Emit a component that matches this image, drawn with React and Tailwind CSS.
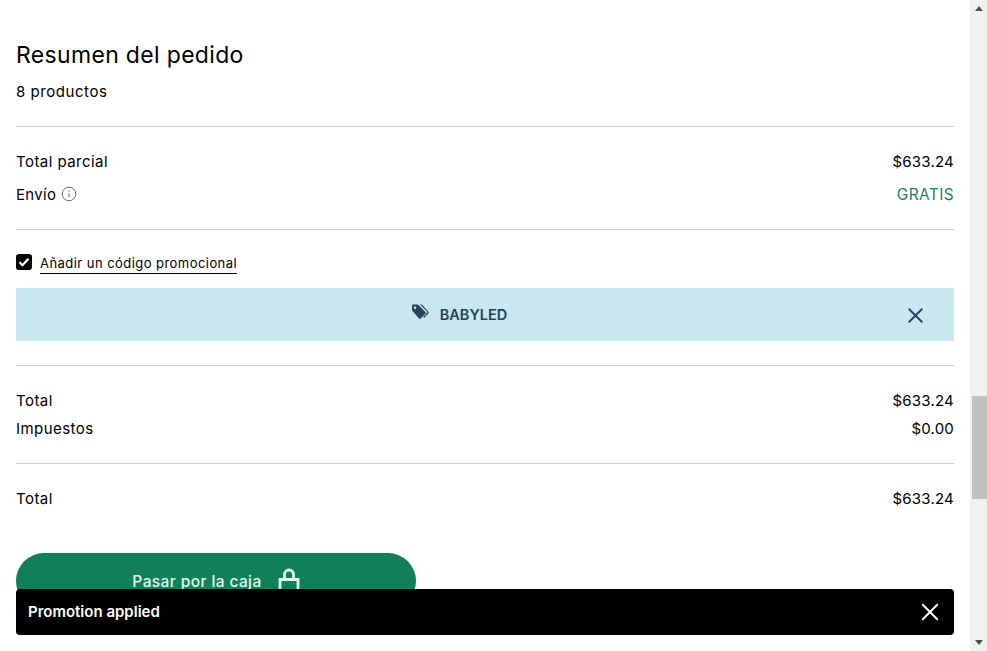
import React from "react";
import { X } from "lucide-react";

function Row({ label, value, className = "" }) {
  return (
    <div className={`flex items-center justify-between ${className}`}>
      <span>{label}</span>
      <span className="tracking-[0.2px]">{value}</span>
    </div>
  );
}

function TagIcon() {
  return (
    <svg viewBox="0 0 18 16" fill="#24445c" className="h-[18px] w-[18px]" aria-hidden="true">
      <path d="M1 1.6C1 1 1.500.5 2.100.5h4.200c.4 0 .8.2 1.100.5l7 7c.5.5.5 1.300 0 1.800l-4.600 4.600c-.5.5-1.300.5-1.800 0L1.500 7.100C1.200 6.800 1 6.400 1 6V1.600zM4 5a1.300 1.300 0 1 0 0-2.600A1.300 1.300 0 0 0 4 5z" fillRule="evenodd" />
      <path d="M9 .5h1.200c.4 0 .8.2 1.100.5l5.800 6.200c.8.800.8 1.800 0 2.600l-4 4.100-.9-.9 3.800-3.900c.4-.5.400-1 0-1.500L9 .5z" />
    </svg>
  );
}

function LockIcon() {
  return (
    <svg viewBox="0 0 22 28" fill="none" stroke="currentColor" strokeWidth="2.800" className="h-[28px] w-[22px]" aria-hidden="true">
      <path d="M2 11.500h18V26H2z" />
      <path d="M6.500 11.500V6.500a4.500 4.500 0 0 1 9 0v5" />
    </svg>
  );
}

export default function App() {
  return (
    <div className="flex h-[651px] overflow-hidden bg-white font-['Inter',sans-serif] text-[15px] tracking-[0.45px] text-black">
      <main className="min-w-0 flex-1 px-4">
        <h1 className="mt-[40px] h-[30px] text-[23px] leading-[30px] font-normal tracking-[0.33px] text-black">
          Resumen del pedido
        </h1>
        <p className="mt-[10px] h-[24px] leading-[24px] tracking-[0.55px]">8 productos</p>

        <div className="mt-[22px] border-t border-[#cfcfcf] pt-[23px]">
          <Row label="Total parcial" value="$633.24" className="h-[24px]" />
          <div className="mt-[9px] flex h-[24px] items-center justify-between">
            <div className="flex items-center gap-[5px]">
              <span className="tracking-[0.3px]">Envío</span>
              <svg viewBox="0 0 16 16" fill="none" stroke="#666" className="mb-[3px] h-[16px] w-[16px]" aria-hidden="true">
                <circle cx="8" cy="8" r="6.800" />
                <path d="M8 7.200v4M8 4.500v1.200" />
              </svg>
            </div>
            <span className="text-[15.500px] tracking-[0.35px] text-[#1f7f5f]">GRATIS</span>
          </div>
        </div>

        <div className="mt-[22px] border-t border-[#cfcfcf] pt-[24px]">
          <div className="flex h-[20px] items-start gap-2">
            <span className="flex h-[16px] w-[16px] items-center justify-center rounded-[3px] bg-black">
              <svg viewBox="0 0 16 16" fill="none" stroke="white" strokeWidth="2.200" className="h-[16px] w-[16px]" aria-hidden="true">
                <path d="M3.500 8.200l3 3 6-6.400" />
              </svg>
            </span>
            <span className="border-b border-black text-[13px] leading-[19px] tracking-[0.45px]">
              Añadir un código promocional
            </span>
          </div>
          <div className="relative mt-[14px] flex h-[53px] items-center justify-center gap-[11px] bg-[#c9e7f1] pr-[52px] text-[#24445c]">
            <span className="mb-[5px]"><TagIcon /></span>
            <span className="text-[14.500px] font-semibold tracking-normal">BABYLED</span>
            <X className="absolute top-[15px] right-[26px] h-[25px] w-[25px]" strokeWidth={1.800} />
          </div>
        </div>

        <div className="mt-[24px] border-t border-[#cfcfcf] pt-[23px]">
          <Row label="Total" value="$633.24" className="h-[24px]" />
          <Row label="Impuestos" value="$0.00" className="mt-[4px] h-[24px]" />
        </div>

        <div className="mt-[22px] border-t border-[#cfcfcf] pt-[23px]">
          <Row label="Total" value="$633.24" className="h-[24px]" />
        </div>

        <button
          type="button"
          className="mt-[42px] flex h-[56px] w-[400px] items-center justify-center gap-[16px] rounded-[28px] bg-[#108058] pt-[2px] text-[15.500px] font-medium tracking-[0.4px] text-[#e8f6f0]"
        >
          Pasar por la caja
          <LockIcon />
        </button>
      </main>

      <aside className="flex w-[17px] flex-none flex-col items-end bg-[#f1f1f1]">
        <div className="flex h-[17px] w-[17px] flex-none items-center justify-center">
          <span className="h-0 w-0 border-x-[4px] border-b-[5px] border-x-transparent border-b-[#505050]" />
        </div>
        <div className="mt-[379px] h-[103px] w-[15px] flex-none bg-[#c1c1c1]" />
        <div className="flex-1" />
        <div className="flex h-[17px] w-[17px] flex-none items-center justify-center">
          <span className="h-0 w-0 border-x-[4px] border-t-[5px] border-x-transparent border-t-[#505050]" />
        </div>
      </aside>

      <div className="fixed top-[589px] left-[16px] flex h-[46px] w-[938px] items-center justify-between rounded-[4px] bg-black px-[12px] text-[15px] font-semibold tracking-normal text-white">
        <span>Promotion applied</span>
        <X className="h-[24px] w-[24px] scale-[1.200]" strokeWidth={1.600} />
      </div>
    </div>
  );
}
